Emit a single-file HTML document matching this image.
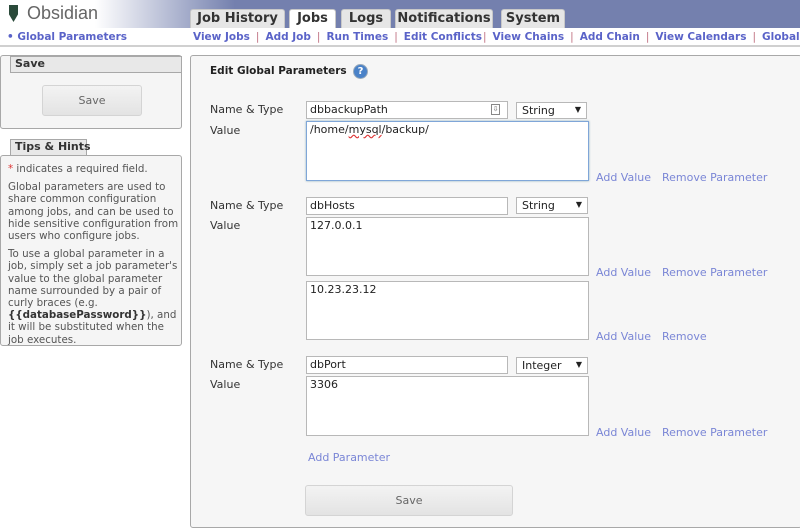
<!DOCTYPE html>
<html><head><meta charset="utf-8"><style>
*{box-sizing:border-box;margin:0;padding:0}
body{width:800px;height:530px;overflow:hidden;background:#fff;font-family:"DejaVu Sans","Liberation Sans",sans-serif;font-size:10.5px;color:#333;position:relative}
.a{position:absolute;white-space:nowrap}
.hdr{left:0;top:0;width:800px;height:28px;background:linear-gradient(90deg,#fff 0,#fff 95px,#7480ae 235px,#7480ae 100%)}
.tab{position:absolute;top:9px;height:19px;background:#e6e6e6;border:1px solid #c8c8c8;border-bottom:none;border-radius:3px 3px 0 0;font-weight:bold;font-size:13px;color:#333;text-align:center;line-height:18px}
.nav{left:0;top:28px;width:800px;height:19px;border-bottom:2px solid #d0d0d0;font-weight:bold;color:#5a63c8;font-size:10.5px}
.nav span{position:absolute;top:3px;white-space:nowrap}
.sep{color:#c07080;font-weight:normal;padding:0 6px}
.box{border:1px solid #a8a8a8;border-radius:3px;background:#f5f5f5}
.btab{background:#e8e8e8;border:1px solid #a8a8a8;font-weight:bold;font-size:11px;padding-left:4px;line-height:14px}
.btn{border:1px solid #d4d4d4;border-radius:3px;background:linear-gradient(#f3f3f3,#e3e3e3);color:#666;text-align:center;font-size:11px}
.inp{background:#fff;border:1px solid #b8b8b8;font-size:11px;padding:1px 3px;color:#222}
.sel{background:#fff;border:1px solid #b8b8b8;font-size:11px;padding:1px 5px;color:#222}
.sel:after{content:"▼";position:absolute;right:5px;top:2px;font-size:8px}
.lbl{font-size:11px;color:#333}
.lk{color:#7a86d6;font-size:11px;white-space:nowrap}
.tips{font-size:10.3px;line-height:12.2px;color:#555;white-space:normal}
</style></head><body>
<div class="a hdr"></div>
<div class="a" style="left:9px;top:5px;width:9px;height:17px;background:#2a4a3a;clip-path:polygon(0 0,100% 0,100% 55%,50% 100%,0 55%)"></div>
<div class="a" style="left:27px;top:3px;font-size:18px;color:#666;font-family:'Liberation Sans',sans-serif">Obsidian</div>
<div class="tab" style="left:190px;width:95px">Job History</div>
<div class="tab" style="left:289px;width:47px;background:#fff">Jobs</div>
<div class="tab" style="left:341px;width:50px">Logs</div>
<div class="tab" style="left:395px;width:98px">Notifications</div>
<div class="tab" style="left:501px;width:64px">System</div>
<div class="a nav">
<span style="left:7px">• Global Parameters</span>
<span style="left:193px">View Jobs<b class="sep">|</b>Add Job<b class="sep">|</b>Run Times<b class="sep">|</b>Edit Conflicts<b class="sep" style="padding-left:1px">|</b>View Chains<b class="sep">|</b>Add Chain<b class="sep">|</b>View Calendars<b class="sep">|</b>Global</span>
</div>
<div class="a box" style="left:0;top:55px;width:182px;height:74px"></div>
<div class="a btab" style="left:10px;top:56px;width:172px;height:17px">Save</div>
<div class="a btn" style="left:42px;top:85px;width:100px;height:31px;line-height:29px">Save</div>
<div class="a btab" style="left:10px;top:139px;width:77px;height:17px;border-bottom:none">Tips &amp; Hints</div>
<div class="a box" style="left:0;top:155px;width:182px;height:191px"></div>
<div class="a tips" style="left:8px;top:163px;width:172px">
<div><span style="color:#d33">*</span> indicates a required field.</div>
<div style="margin-top:6px">Global parameters are used to share common configuration among jobs, and can be used to hide sensitive configuration from users who configure jobs.</div>
<div style="margin-top:6px">To use a global parameter in a job, simply set a job parameter's value to the global parameter name surrounded by a pair of curly braces (e.g. <b style="color:#333">{{databasePassword}}</b>), and it will be substituted when the job executes.</div>
</div>
<div class="a box" style="left:190px;top:55px;width:612px;height:473px;background:#f6f6f6"></div>
<div class="a" style="left:210px;top:65px;font-weight:bold;font-size:10.5px;color:#222">Edit Global Parameters</div>
<div class="a" style="left:353px;top:64px;width:15px;height:15px;border-radius:50%;background:#4a82c8;border:1px solid #9ab;color:#fff;font-size:10px;font-weight:bold;text-align:center;line-height:13px">?</div>

<div class="a lbl" style="left:210px;top:103px">Name &amp; Type</div>
<div class="a inp" style="left:306px;top:101px;width:202px;height:18px">dbbackupPath</div>
<div class="a" style="left:491px;top:104px;width:9px;height:11px;border:1px solid #888;font-size:7px;text-align:center;line-height:9px;color:#666">⇩</div>
<div class="a sel" style="left:516px;top:102px;width:71px;height:17px">String</div>
<div class="a lbl" style="left:210px;top:124px">Value</div>
<div class="a inp" style="left:306px;top:121px;width:283px;height:60px;border:1px solid #7fa6d8;box-shadow:0 0 2px #8ab">/home/<span style="text-decoration:underline wavy #d33">mysql</span>/backup/</div>
<div class="a lk" style="left:596px;top:171px">Add Value</div>
<div class="a lk" style="left:662px;top:171px">Remove Parameter</div>

<div class="a lbl" style="left:210px;top:199px">Name &amp; Type</div>
<div class="a inp" style="left:306px;top:197px;width:202px;height:18px">dbHosts</div>
<div class="a sel" style="left:516px;top:197px;width:72px;height:17px">String</div>
<div class="a lbl" style="left:210px;top:219px">Value</div>
<div class="a inp" style="left:306px;top:217px;width:283px;height:59px">127.0.0.1</div>
<div class="a lk" style="left:596px;top:266px">Add Value</div>
<div class="a lk" style="left:662px;top:266px">Remove Parameter</div>
<div class="a inp" style="left:306px;top:281px;width:283px;height:59px">10.23.23.12</div>
<div class="a lk" style="left:596px;top:330px">Add Value</div>
<div class="a lk" style="left:662px;top:330px">Remove</div>

<div class="a lbl" style="left:210px;top:358px">Name &amp; Type</div>
<div class="a inp" style="left:306px;top:356px;width:202px;height:18px">dbPort</div>
<div class="a sel" style="left:516px;top:357px;width:72px;height:17px">Integer</div>
<div class="a lbl" style="left:210px;top:378px">Value</div>
<div class="a inp" style="left:306px;top:376px;width:283px;height:60px">3306</div>
<div class="a lk" style="left:596px;top:426px">Add Value</div>
<div class="a lk" style="left:662px;top:426px">Remove Parameter</div>
<div class="a lk" style="left:308px;top:451px">Add Parameter</div>
<div class="a btn" style="left:305px;top:485px;width:208px;height:31px;line-height:29px">Save</div>
</body></html>
